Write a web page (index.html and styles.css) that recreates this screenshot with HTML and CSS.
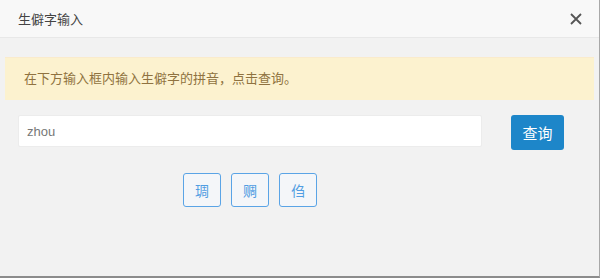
FILE: index.html
```html
<!DOCTYPE html>
<html lang="zh-CN">
<head>
    <meta charset="UTF-8">
    <meta name="viewport" content="width=device-width, initial-scale=1.0">
    <title>生僻字输入</title>
    <link rel="stylesheet" href="styles.css">
</head>
<body>
    <div class="dialog">
        <div class="dialog-header">
            <span class="dialog-title">生僻字输入</span>
            <svg class="close-btn" width="12" height="12" viewBox="0 0 12 12">
                <path d="M1 1 L11 11 M11 1 L1 11" stroke="#555" stroke-width="1.8" fill="none"/>
            </svg>
        </div>
        <div class="dialog-body">
            <div class="alert">在下方输入框内输入生僻字的拼音，点击查询。</div>
            <div class="search-row">
                <div class="search-col">
                    <input type="text" class="pinyin-input" value="zhou">
                    <div class="chars">
                        <button class="char-btn">琱</button>
                        <button class="char-btn">赒</button>
                        <button class="char-btn">㑇</button>
                    </div>
                </div>
                <button class="query-btn">查询</button>
            </div>
        </div>
    </div>
</body>
</html>
```
FILE: styles.css
```css
html, body {
    margin: 0;
    padding: 0;
}
body {
    font-family: "Liberation Sans", "Noto Sans CJK SC", sans-serif;
    width: 600px;
    height: 278px;
    overflow: hidden;
}
.dialog {
    width: 599px;
    height: 276px;
    background-color: #f2f2f2;
    border-right: 1px solid #a8a8a8;
    border-bottom: 2px solid #8c8c8c;
    display: flex;
    flex-direction: column;
}
.dialog-header {
    height: 37px;
    background-color: #f8f8f8;
    border-bottom: 1px solid #e8e8e8;
    display: flex;
    align-items: center;
    justify-content: space-between;
    padding: 0 17px 0 18px;
}
.dialog-title {
    font-size: 13px;
    color: #444;
}
.dialog-body {
    padding: 19px 5px 0 5px;
}
.alert {
    background-color: #fcf2cf;
    border-top: 1px solid #faebcc;
    color: #8f7240;
    font-size: 13px;
    height: 42px;
    line-height: 42px;
    padding-left: 19px;
}
.search-row {
    display: flex;
    align-items: flex-start;
    padding: 15px 0 0 13px;
}
.search-col {
    width: 464px;
    display: flex;
    flex-direction: column;
    align-items: center;
}
.pinyin-input {
    box-sizing: border-box;
    width: 464px;
    height: 32px;
    border: 1px solid #ececec;
    border-radius: 2px;
    background-color: white;
    padding: 0 8px;
    font-family: "Liberation Sans", "Noto Sans CJK SC", sans-serif;
    font-size: 13px;
    color: #777;
    outline: none;
}
.chars {
    display: flex;
    gap: 10px;
    margin-top: 26px;
}
.char-btn {
    width: 38px;
    height: 34px;
    background-color: #f4f6f9;
    border: 1px solid #5aa4e6;
    border-radius: 3px;
    color: #519de2;
    font-family: "Noto Sans CJK SC", sans-serif;
    font-size: 14px;
    padding: 0;
}
.query-btn {
    margin-left: 29px;
    width: 53px;
    height: 35px;
    background-color: #1d86c9;
    border: none;
    border-radius: 3px;
    color: white;
    font-family: "Noto Sans CJK SC", sans-serif;
    font-size: 15px;
    padding: 0;
}
```
